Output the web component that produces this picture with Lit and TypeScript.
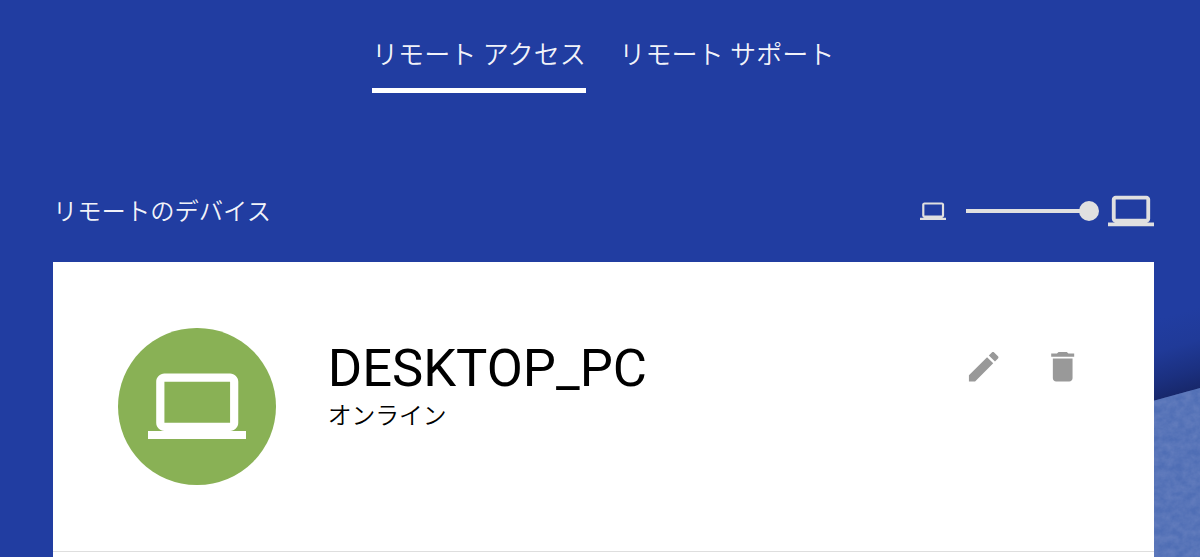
import { LitElement, css, html, svg } from 'lit';
import { customElement, property } from 'lit/decorators.js';

const icons = {
  laptop: svg`<path d="M20 18c1.1 0 1.99-.9 1.99-2L22 6c0-1.1-.9-2-2-2H4c-1.1 0-2 .9-2 2v10c0 1.1.9 2 2 2H0v2h24v-2h-4zM4 6h16v10H4V6z" />`,
  edit: svg`<path d="M3 17.25V21h3.75L17.81 9.94l-3.75-3.75L3 17.25zM20.71 7.04c.39-.39.39-1.02 0-1.41l-2.34-2.34c-.39-.39-1.02-.39-1.41 0l-1.83 1.83 3.75 3.75 1.83-1.83z" />`,
  delete: svg`<path d="M6 19c0 1.1.9 2 2 2h8c1.1 0 2-.9 2-2V7H6v12zM19 4h-3.5l-1-1h-5l-1 1H5v2h14V4z" />`,
};

@customElement('app-icon')
export class AppIcon extends LitElement {
  static styles = css`
    :host {
      display: block;
      flex: none;
    }
    svg {
      display: block;
      width: 100%;
      height: 100%;
      fill: currentColor;
    }
  `;

  @property() name: keyof typeof icons = 'laptop';

  render() {
    return html`<svg viewBox="0 0 24 24">${icons[this.name]}</svg>`;
  }
}

@customElement('size-slider')
export class SizeSlider extends LitElement {
  static styles = css`
    :host {
      display: flex;
      align-items: center;
      color: #e0e0e0;
    }
    .small {
      width: 26.3px;
      height: 26.3px;
    }
    .large {
      width: 46px;
      height: 46px;
    }
    .track {
      width: 133px;
      height: 20px;
      margin: 0 9.5px 0 19.7px;
      display: flex;
      align-items: center;
    }
    .line {
      flex: 1;
      height: 4px;
      background: currentColor;
    }
    .knob {
      width: 20px;
      height: 20px;
      margin-left: -2px;
      border-radius: 50%;
      background: currentColor;
    }
  `;

  render() {
    return html`
      <app-icon class="small" name="laptop"></app-icon>
      <div class="track">
        <div class="line"></div>
        <div class="knob"></div>
      </div>
      <app-icon class="large" name="laptop"></app-icon>
    `;
  }
}

@customElement('device-row')
export class DeviceRow extends LitElement {
  static styles = css`
    :host {
      display: flex;
      box-sizing: border-box;
      height: 290px;
      padding: 65.6px 72px 0 65.5px;
      border-bottom: 1.5px solid #dedede;
      color: #000;
    }
    .avatar {
      display: grid;
      place-items: center;
      flex: none;
      width: 157.5px;
      height: 157.5px;
      border-radius: 50%;
      background: #89b155;
      color: #fff;
    }
    .avatar app-icon {
      width: 98.5px;
      height: 98.5px;
    }
    .info {
      flex: 1;
      margin-left: 52.2px;
      padding-top: 9px;
    }
    .name {
      font-size: 52.5px;
      line-height: 62px;
    }
    .status {
      font-family: 'Noto Sans CJK JP DemiLight', 'Noto Sans CJK JP', sans-serif;
      font-size: 23.8px;
      font-weight: 350;
      line-height: 29px;
    }
    .actions {
      display: flex;
      gap: 39.4px;
      padding-top: 19.4px;
      color: #999;
    }
    .actions app-icon {
      width: 39.4px;
      height: 39.4px;
    }
  `;

  @property() name = '';
  @property() status = '';

  render() {
    return html`
      <div class="avatar"><app-icon name="laptop"></app-icon></div>
      <div class="info">
        <div class="name">${this.name}</div>
        <div class="status">${this.status}</div>
      </div>
      <div class="actions">
        <app-icon name="edit"></app-icon>
        <app-icon name="delete"></app-icon>
      </div>
    `;
  }
}

@customElement('app-root')
export class AppRoot extends LitElement {
  static styles = css`
    :host {
      display: block;
      position: relative;
      height: 557px;
      overflow: hidden;
      background: #213da1;
      color: rgba(255, 255, 255, 0.95);
      font-family: Roboto, 'Noto Sans CJK JP', sans-serif;
    }
    .backdrop {
      position: absolute;
      right: 0;
      bottom: 0;
      width: 100px;
      height: 257px;
    }
    .page {
      position: relative;
    }
    .tabs {
      display: flex;
      justify-content: center;
      gap: 33.5px;
      padding-top: 36px;
      padding-left: 6.5px;
      font-family: Roboto, 'Noto Sans CJK JP DemiLight', 'Noto Sans CJK JP', sans-serif;
      font-size: 26.1px;
      font-weight: 350;
      line-height: 38px;
      white-space: nowrap;
    }
    .tab {
      height: 52.4px;
      border-bottom: 5px solid transparent;
    }
    .tab.active {
      border-color: #fff;
    }
    .header {
      display: flex;
      align-items: center;
      justify-content: space-between;
      height: 46px;
      margin: 94.9px 46px 0 53px;
    }
    .title {
      padding-bottom: 3px;
      font-family: 'Noto Sans CJK JP DemiLight', 'Noto Sans CJK JP', sans-serif;
      font-size: 24.3px;
      font-weight: 350;
    }
    .card {
      height: 300px;
      margin: 27.7px 46px 0 52.5px;
      background: #fff;
    }
  `;

  tabs = ['リモート アクセス', 'リモート サポート'];

  render() {
    return html`
      <svg class="backdrop" viewBox="1100 300 100 257">
        <defs>
          <linearGradient id="shade" gradientUnits="userSpaceOnUse" x1="1160" y1="318" x2="1182" y2="394">
            <stop offset="0" stop-color="#213da1" />
            <stop offset="0.4" stop-color="#203a98" />
            <stop offset="0.75" stop-color="#1b3080" />
            <stop offset="1" stop-color="#17276a" />
          </linearGradient>
          <filter id="grain" x="0" y="0" width="100%" height="100%" color-interpolation-filters="sRGB">
            <feTurbulence type="fractalNoise" baseFrequency="0.12 0.14" numOctaves="3" seed="4" />
            <feColorMatrix values="0 0 0 0 0.43  0 0 0 0 0.52  0 0 0 0 0.76  1 0 0 0 -0.2" />
            <feComposite in2="SourceGraphic" operator="in" />
          </filter>
        </defs>
        <rect x="1100" y="300" width="100" height="257" fill="url(#shade)" />
        <path d="M1100 415.5L1200 388V557H1100z" fill="#4f6eb5" />
        <path d="M1100 415.5L1200 388V557H1100z" filter="url(#grain)" />
      </svg>
      <div class="page">
        <nav class="tabs">
          ${this.tabs.map((tab, i) => html`<div class="tab ${i === 0 ? 'active' : ''}">${tab}</div>`)}
        </nav>
        <div class="header">
          <div class="title">リモートのデバイス</div>
          <size-slider></size-slider>
        </div>
        <div class="card">
          <device-row name="DESKTOP_PC" status="オンライン"></device-row>
        </div>
      </div>
    `;
  }
}
